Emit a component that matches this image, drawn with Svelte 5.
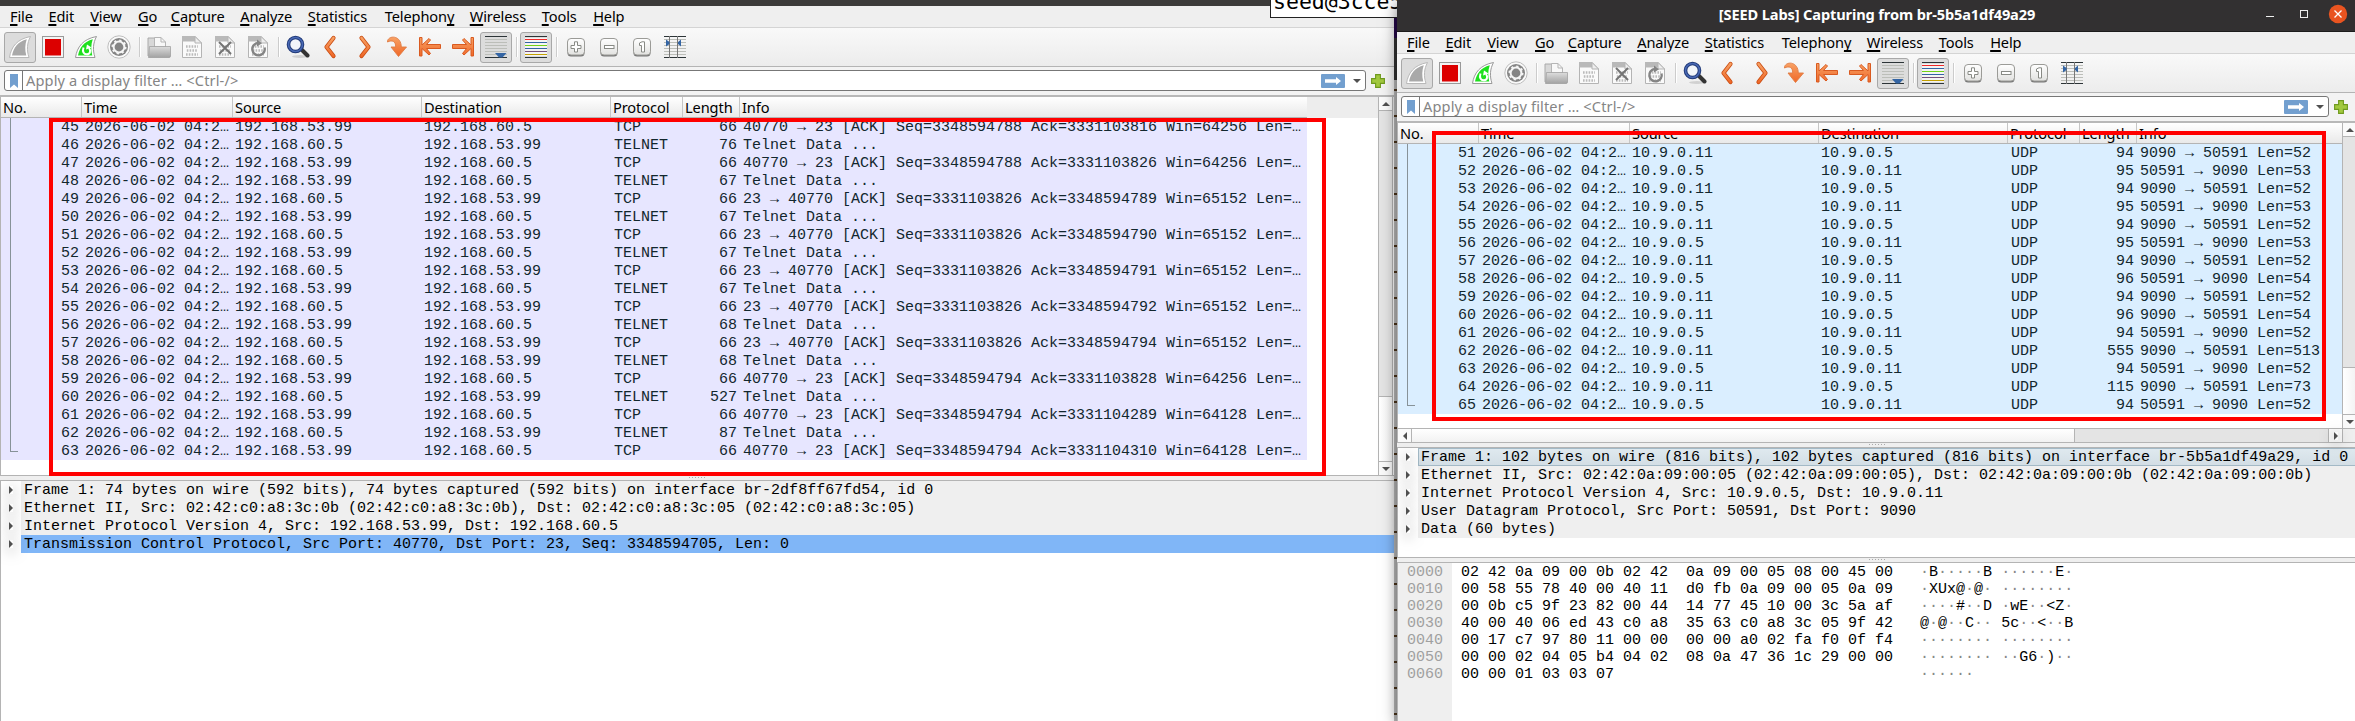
<script lang="ts">
    type Packet = [number, string, string, string, number, string];

    const menus = [
        { label: "File", key: 0, width: 38.4 },
        { label: "Edit", key: 0, width: 41.8 },
        { label: "View", key: 0, width: 47.8 },
        { label: "Go", key: 0, width: 32.8 },
        { label: "Capture", key: 0, width: 69.4 },
        { label: "Analyze", key: 0, width: 67.6 },
        { label: "Statistics", key: 0, width: 77 },
        { label: "Telephony", key: 8, width: 85 },
        { label: "Wireless", key: 0, width: 72 },
        { label: "Tools", key: 0, width: 51.4 },
        { label: "Help", key: 0, width: 46 },
    ];

    const tools = [
        "start", "stop", "restart", "options", "|",
        "open", "save", "close", "reload", "|",
        "find", "back", "forward", "goto", "first", "last", "autoscroll", "|",
        "colorize", "|",
        "zoomin", "zoomout", "zoom1", "columns",
    ];
    const pressed = ["start", "autoscroll", "colorize"];
    const columns = ["No.", "Time", "Source", "Destination", "Protocol", "Length", "Info"];

    const A = "192.168.53.99";
    const B = "192.168.60.5";
    const toServer = (ack: number, win: number) =>
        `40770 → 23 [ACK] Seq=33485947${ack < 3331103827 ? 88 : 94} Ack=${ack} Win=${win} Len=…`;
    const toClient = (ack: number) => `23 → 40770 [ACK] Seq=3331103826 Ack=${ack} Win=65152 Len=…`;
    const telnet = "Telnet Data ...";

    const telnetPackets: Packet[] = [
        [45, A, B, "TCP", 66, toServer(3331103816, 64256)],
        [46, B, A, "TELNET", 76, telnet],
        [47, A, B, "TCP", 66, toServer(3331103826, 64256)],
        [48, A, B, "TELNET", 67, telnet],
        [49, B, A, "TCP", 66, toClient(3348594789)],
        [50, A, B, "TELNET", 67, telnet],
        [51, B, A, "TCP", 66, toClient(3348594790)],
        [52, A, B, "TELNET", 67, telnet],
        [53, B, A, "TCP", 66, toClient(3348594791)],
        [54, A, B, "TELNET", 67, telnet],
        [55, B, A, "TCP", 66, toClient(3348594792)],
        [56, A, B, "TELNET", 68, telnet],
        [57, B, A, "TCP", 66, toClient(3348594794)],
        [58, B, A, "TELNET", 68, telnet],
        [59, A, B, "TCP", 66, toServer(3331103828, 64256)],
        [60, B, A, "TELNET", 527, telnet],
        [61, A, B, "TCP", 66, toServer(3331104289, 64128)],
        [62, B, A, "TELNET", 87, telnet],
        [63, A, B, "TCP", 66, toServer(3331104310, 64128)],
    ];

    // [number, sent by the client, frame length]
    const udpFrames: [number, boolean, number][] = [
        [51, false, 94], [52, true, 95], [53, false, 94], [54, true, 95], [55, false, 94],
        [56, true, 95], [57, false, 94], [58, true, 96], [59, false, 94], [60, false, 96],
        [61, true, 94], [62, false, 555], [63, true, 94], [64, false, 115], [65, true, 94],
    ];
    const udpPackets: Packet[] = udpFrames.map(([no, out, len]) => [
        no,
        out ? "10.9.0.5" : "10.9.0.11",
        out ? "10.9.0.11" : "10.9.0.5",
        "UDP",
        len,
        `${out ? "50591 → 9090" : "9090 → 50591"} Len=${len - 42}`,
    ]);

    const telnetTree = [
        "Frame 1: 74 bytes on wire (592 bits), 74 bytes captured (592 bits) on interface br-2df8ff67fd54, id 0",
        "Ethernet II, Src: 02:42:c0:a8:3c:0b (02:42:c0:a8:3c:0b), Dst: 02:42:c0:a8:3c:05 (02:42:c0:a8:3c:05)",
        "Internet Protocol Version 4, Src: 192.168.53.99, Dst: 192.168.60.5",
        "Transmission Control Protocol, Src Port: 40770, Dst Port: 23, Seq: 3348594705, Len: 0",
    ];
    const udpTree = [
        "Frame 1: 102 bytes on wire (816 bits), 102 bytes captured (816 bits) on interface br-5b5a1df49a29, id 0",
        "Ethernet II, Src: 02:42:0a:09:00:05 (02:42:0a:09:00:05), Dst: 02:42:0a:09:00:0b (02:42:0a:09:00:0b)",
        "Internet Protocol Version 4, Src: 10.9.0.5, Dst: 10.9.0.11",
        "User Datagram Protocol, Src Port: 50591, Dst Port: 9090",
        "Data (60 bytes)",
    ];

    const dump = [
        "02 42 0a 09 00 0b 02 42  0a 09 00 05 08 00 45 00",
        "00 58 55 78 40 00 40 11  d0 fb 0a 09 00 05 0a 09",
        "00 0b c5 9f 23 82 00 44  14 77 45 10 00 3c 5a af",
        "40 00 40 06 ed 43 c0 a8  35 63 c0 a8 3c 05 9f 42",
        "00 17 c7 97 80 11 00 00  00 00 a0 02 fa f0 0f f4",
        "00 00 02 04 05 b4 04 02  08 0a 47 36 1c 29 00 00",
        "00 00 01 03 03 07",
    ];
    const toAscii = (line: string) =>
        line.split("  ").map((half) =>
            half.split(" ").map((h) => {
                const n = parseInt(h, 16);
                return n > 32 && n < 127 ? String.fromCharCode(n) : "·";
            })
        );
</script>

{#snippet fin(fill, edge)}
    <path d="M1.5 22.5C3 12 9 4 22.5 1.5C19 8 18.5 15 21 22.5Z" fill="#fff" stroke={edge} />
    <path d="M4 20.5C5.500 12.500 10 6.500 18.800 4.200C17 9 16.700 15 18.300 20.500Z" {fill} />
{/snippet}

{#snippet sheet()}
    <path d="M2.500 1.500H15L21.500 8V22.500H2.500Z" fill="#fafafa" stroke="#b4b4b4" />
    <path d="M2 1H15L20 6.500H2Z" fill="#b9b9b9" />
    <path d="M15 1.500V8H21.500Z" fill="#eee" stroke="#b4b4b4" />
{/snippet}

{#snippet bits()}
    <g stroke="#bbb" stroke-width="2.600" stroke-dasharray="1.600 1.200">
        <path d="M6 11.500H18" /><path d="M6.800 15.500H18" /><path d="M6 19.500H18" />
    </g>
{/snippet}

{#snippet key()}
    <rect x="3.500" y="4" width="17" height="17.500" rx="3.500" fill="#777" />
    <rect x="3.500" y="3.500" width="17" height="16.500" rx="3.500" fill="url(#key)" stroke="#9b9b97" />
{/snippet}

{#snippet icon(name)}
    <svg width="24" height="24" viewBox="0 0 24 24" fill="none">
        {#if name === "start"}
            {@render fin("#a9a9a9", "#b9b9b9")}
        {:else if name === "stop"}
            <rect x="1.500" y="1.500" width="21" height="21" fill="#f4f4f4" stroke="#999" />
            <rect x="4" y="4" width="16" height="16.500" fill="#dc0000" />
        {:else if name === "restart"}
            {@render fin("#1ee01e", "#9a9a9a")}
            <path d="M9.500 12.500C8 17 10 19.300 12.500 19.300C16 19.300 17.300 16 15 13" stroke="#fff" stroke-width="2" />
            <path d="M12 14.500L13 9.500L17.500 12.500Z" fill="#fff" />
        {:else if name === "options"}
            <circle cx="12" cy="12" r="11.200" fill="#fafafa" stroke="#bdbdbd" />
            <circle cx="12" cy="12" r="9" fill="#858585" />
            <circle cx="12" cy="12" r="5.400" stroke="#f5f5f5" stroke-width="2" />
            <circle cx="12" cy="12" r="6.700" stroke="#f5f5f5" stroke-width="1.700" stroke-dasharray="2.300 2.960" />
            <circle cx="12" cy="12" r="2.400" fill="#858585" />
        {:else if name === "open"}
            <path d="M1 21V3H8L10 5V10" fill="#d8d8d8" stroke="#aaa" />
            <path d="M7.500 12V2.500H14L18.500 7V12Z" fill="#f8f8f8" stroke="#b5b5b5" />
            <path d="M14 2.500V7H18.500" stroke="#b5b5b5" />
            <path d="M2.500 11.500H23.500V21Q23.500 22.500 22 22.500H1.500Z" fill="url(#folder)" stroke="#999" stroke-width=".7" />
        {:else if name === "save"}
            {@render sheet()}{@render bits()}
        {:else if name === "close"}
            {@render sheet()}{@render bits()}
            <path d="M6 7L18 19M18 7L6 19" stroke="#747474" stroke-width="2" />
        {:else if name === "reload"}
            {@render sheet()}{@render bits()}
            <path d="M18.500 12.500A6.200 6.200 0 1 1 12 8" stroke="#848484" stroke-width="2.400" />
            <path d="M11 4.500L16 8.200L11 11.500Z" fill="#848484" />
        {:else if name === "find"}
            <ellipse cx="14" cy="21.500" rx="8" ry="1.500" fill="#000" opacity=".13" />
            <path d="M16 15L21.500 20.500" stroke="#333" stroke-width="4" stroke-linecap="round" />
            <circle cx="9.500" cy="9.500" r="7" fill="#f1f5fa" stroke="#213a78" stroke-width="3.600" />
            <circle cx="9.500" cy="9.500" r="7" stroke="#4868b4" stroke-width="1.600" />
        {:else if name === "back"}
            <path d="M14.500 3L7.500 12L14.500 21" stroke="#c84b10" stroke-width="4.200" stroke-linecap="round" stroke-linejoin="round" />
            <path d="M14.500 3L7.500 12L14.500 21" stroke="url(#orange)" stroke-width="2.600" stroke-linecap="round" stroke-linejoin="round" />
        {:else if name === "forward"}
            <path d="M9.500 3L16.500 12L9.500 21" stroke="#c84b10" stroke-width="4.200" stroke-linecap="round" stroke-linejoin="round" />
            <path d="M9.500 3L16.500 12L9.500 21" stroke="url(#orange)" stroke-width="2.600" stroke-linecap="round" stroke-linejoin="round" />
        {:else if name === "goto"}
            <path d="M2.500 7C2 .5 16 -1 16.300 12H21.500L13.500 21.500L6 12H10.700C10.800 6 7 4.800 2.500 7Z" fill="url(#orange)" stroke="#e07b42" stroke-width=".9" stroke-linejoin="round" />
        {:else if name === "first"}
            <path d="M1.500 2.500H4V10L11 3.500L12.500 5L8.500 9.500H22.500V13.500H8.500L12.500 18.500L11 20L4 13.500V21H1.500Z" fill="url(#orange)" stroke="#d95a20" stroke-linejoin="round" />
        {:else if name === "last"}
            <path d="M22.500 2.500H20V10L13 3.500L11.500 5L15.500 9.500H1.500V13.500H15.500L11.500 18.500L13 20L20 13.500V21H22.500Z" fill="url(#orange)" stroke="#d95a20" stroke-linejoin="round" />
        {:else if name === "autoscroll"}
            <path d="M1 4.500H23M1 7.500H23M1 10.500H23M1 13.500H23M1 16.500H23M1 19.500H23" stroke="#bcbeb9" />
            <path d="M1 1.500H23M1 22.500H23" stroke="#2c3437" />
            <path d="M11 18H22.500L18.500 22.500H15Z" fill="#3465a4" />
        {:else if name === "colorize"}
            <path d="M1 3H23V21H1Z" fill="#f4f4f4" />
            <path d="M1 1.500H23M1 22.500H23" stroke="#2c3437" />
            <path d="M1 4.500H23" stroke="#ef2929" />
            <path d="M1 7.500H23M1 13.500H23" stroke="#3465a4" />
            <path d="M1 10.500H23" stroke="#73d216" />
            <path d="M1 16.500H23" stroke="#75507b" />
            <path d="M1 19.500H23" stroke="#c4a000" />
        {:else if name === "zoomin"}
            {@render key()}
            <path d="M10.500 6.800H13.500V10.500H17V13.500H13.500V17H10.500V13.500H7V10.500H10.500Z" fill="#fff" stroke="#888a85" />
        {:else if name === "zoomout"}
            {@render key()}
            <rect x="7.500" y="10.500" width="9.500" height="3" fill="#fff" stroke="#888a85" />
        {:else if name === "zoom1"}
            {@render key()}
            <path d="M9.500 8L12 6.800H14.500V17H11.500V10.500H9.500Z" fill="#fff" stroke="#888a85" />
        {:else if name === "columns"}
            <path d="M1 4.500H23M1 7.500H23M1 10.500H23M1 13.500H23M1 16.500H23M1 19.500H23" stroke="#bcbeb9" />
            <path d="M1 1.500H23M1 22.500H23" stroke="#2c3437" />
            <path d="M6.500 1V23M14.500 1V23" stroke="#777" />
            <path d="M3 4.500L6.500 7V9L3 11.500ZM18 4.500L15 7V9L18 11.500Z" fill="#3465a4" />
        {/if}
    </svg>
{/snippet}

{#snippet arrow(dir)}
    <span class="arrow {dir}"></span>
{/snippet}

{#snippet chrome()}
    <nav class="menubar">
        {#each menus as { label, key: k, width }}
            <span style="width: {width}px">{label.slice(0, k)}<u>{label[k]}</u>{label.slice(k + 1)}</span>
        {/each}
    </nav>
    <div class="toolbar">
        {#each tools as tool}
            {#if tool === "|"}
                <i class="sep"></i>
            {:else}
                <span class="tool" class:pressed={pressed.includes(tool)}>{@render icon(tool)}</span>
            {/if}
        {/each}
    </div>
    <div class="filterbar">
        <div class="filter">
            <span class="bookmark">
                <svg width="8" height="14" viewBox="0 0 8 14"><path d="M0 0H8V14L4 10.500L0 14Z" fill="#729fcf" /></svg>
            </span>
            <span class="placeholder">Apply a display filter … &lt;Ctrl-/&gt;</span>
            <span class="apply">
                <svg width="16" height="8" viewBox="0 0 16 8"><path d="M0 2.200H11V0L16 4L11 8V5.800H0Z" fill="#fff" /></svg>
            </span>
            {@render arrow("down")}
        </div>
        <svg class="plus" width="14" height="14" viewBox="0 0 14 14">
            <path d="M4.600 .6H9.400V4.600H13.400V9.400H9.400V13.400H4.600V9.400H.6V4.600H4.600Z" fill="#a2c93f" stroke="#6f9a1e" stroke-width="1.100" />
        </svg>
    </div>
{/snippet}

{#snippet packetList(packets: Packet[])}
    <div class="packets">
        <div class="row header">
            {#each columns as column}<span>{column}</span>{/each}
        </div>
        <div class="rows">
            {#each packets as [no, src, dst, proto, len, info], i}
                <div class="row">
                    <span class="num">
                        <i class="thread" class:end={i === packets.length - 1}></i>{no}
                    </span>
                    <span>2026-06-02 04:2…</span>
                    <span class="addr">{src}</span>
                    <span class="addr">{dst}</span>
                    <span>{proto}</span>
                    <span class="num">{len}</span>
                    <span>{info}</span>
                </div>
            {/each}
        </div>
    </div>
{/snippet}

{#snippet scrollbar(thumb)}
    <div class="scrollbar">
        <span class="btn">{@render arrow("up")}</span>
        <span class="groove"></span>
        <span class="thumb" style="height: {thumb}px"></span>
        <span class="btn">{@render arrow("down")}</span>
    </div>
{/snippet}

{#snippet splitter()}
    <div class="splitter"><i></i></div>
{/snippet}

{#snippet tree(lines, selected, focus)}
    {#each lines as line, i}
        <div class="node">
            {@render arrow("right")}
            <span class:selected={i === selected} class:focus={i === focus}>{line}</span>
        </div>
    {/each}
{/snippet}

<svg class="defs" width="0" height="0">
    <defs>
        <linearGradient id="orange" x1="0" y1="0" x2="0" y2="24" gradientUnits="userSpaceOnUse">
            <stop offset="0" stop-color="#f9a86b" />
            <stop offset="1" stop-color="#ee6020" />
        </linearGradient>
        <linearGradient id="key" x1="0" y1="0" x2="0" y2="1">
            <stop offset="0" stop-color="#fff" />
            <stop offset="1" stop-color="#e2e2e0" />
        </linearGradient>
        <linearGradient id="folder" x1="0" y1="0" x2="0" y2="1">
            <stop offset="0" stop-color="#ddd" />
            <stop offset="1" stop-color="#a2a2a2" />
        </linearGradient>
    </defs>
</svg>

<main class="desktop">
    <section class="window left">
        <div class="titlebar"></div>
        {@render chrome()}
        <div class="pane list">
            {@render packetList(telnetPackets)}
            {@render scrollbar(64)}
        </div>
        {@render splitter()}
        <div class="pane details">
            {@render tree(telnetTree, 3, -1)}
        </div>
    </section>

    <div class="terminal"></div>

    <section class="window right">
        <div class="titlebar">
            <b>[SEED Labs] Capturing from br-5b5a1df49a29</b>
            <svg class="controls" width="84" height="20" viewBox="0 0 84 20">
                <path d="M0 12.500H8" stroke="#eee" />
                <rect x="34.500" y="6.500" width="7" height="7" fill="none" stroke="#eee" />
                <circle cx="72" cy="10" r="9.200" fill="#e95420" />
                <path d="M68.500 6.500L75.500 13.500M75.500 6.500L68.500 13.500" stroke="#fff" stroke-width="1.300" />
            </svg>
        </div>
        {@render chrome()}
        <div class="pane list">
            {@render packetList(udpPackets)}
            {@render scrollbar(46)}
        </div>
        <div class="hscroll">
            <span class="hbtn">{@render arrow("left")}</span>
            <span class="hthumb"></span>
            <span class="hgroove"></span>
            <span class="hbtn last">{@render arrow("right")}</span>
            <span class="corner"></span>
        </div>
        {@render splitter()}
        <div class="pane details">
            {@render tree(udpTree, -1, 0)}
        </div>
        {@render splitter()}
        <div class="pane hex">
            {#each dump as line, i}
                <div class="hexrow">
                    <span class="offset">00{i}0</span>
                    <span class="bytes">{line}</span>
                    <span class="ascii"
                        >{#each toAscii(line) as half, h}{h ? " " : ""}{#each half as c}<span class:dot={c === "·"}>{c}</span>{/each}{/each}</span
                    >
                </div>
            {/each}
        </div>
    </section>

    <div class="tooltip">seed@3cce5</div>
    <div class="mark mark-left"></div>
    <div class="mark mark-right"></div>
</main>

<style>
    :global(body) {
        margin: 0;
        overflow: hidden;
    }
    .defs {
        position: absolute;
    }
    .desktop {
        position: relative;
        display: grid;
        grid-template-columns: 1394px 3px 960px;
        width: 2355px;
        height: 721px;
        overflow: hidden;
        font: 14.6px "Noto Sans", sans-serif;
        color: #000;
    }
    .window {
        display: flex;
        flex-direction: column;
        min-width: 0;
        height: 721px;
        background: #efefef;
    }
    .right {
        position: relative;
        z-index: 1;
        box-shadow: 0 3px 14px rgba(0, 0, 0, 0.5);
    }
    .terminal {
        background:
            repeating-linear-gradient(transparent 0 24px, #4b351c 24px 26px) 0 65px no-repeat,
            linear-gradient(#2d2b2b 18px, #26094a 18px 38px, #333 38px 80px, #bbb 80px);
    }
    .titlebar {
        display: flex;
        flex: none;
        align-items: center;
        background: #3c3b3a;
    }
    .left .titlebar {
        height: 6px;
    }
    .right .titlebar {
        height: 31px;
        border-bottom: 1px solid #1c1b1b;
        background: #323031;
        color: #fff;
        line-height: 28px;
    }
    .titlebar b {
        flex: 1;
        padding-bottom: 3px;
        text-align: center;
        letter-spacing: -0.13px;
    }
    .controls {
        margin: 0 7px 4px -91px;
    }

    .menubar {
        display: flex;
        flex: none;
        height: 21px;
        padding-left: 10px;
        border-bottom: 1px solid #d4d4d4;
        line-height: 21px;
        letter-spacing: -0.12px;
        white-space: nowrap;
    }
    .menubar u {
        text-decoration-thickness: 1.6px;
        text-underline-offset: 2px;
        text-decoration-skip-ink: none;
    }

    .toolbar {
        display: flex;
        flex: none;
        align-items: center;
        height: 38px;
        padding-left: 3.5px;
        border-bottom: 1px solid #b4b4b4;
        background: linear-gradient(#f9f9f9, #ececec);
    }
    .tool {
        display: flex;
        align-items: center;
        justify-content: center;
        box-sizing: border-box;
        width: 32px;
        height: 31px;
        margin-right: 1px;
    }
    .pressed {
        border: 1px solid #a8a8a8;
        border-radius: 3px;
        background: #dcdcdc;
    }
    .sep {
        box-sizing: border-box;
        width: 2px;
        height: 20px;
        margin: 0 2px 0 3px;
        border-left: 1px solid #ccc;
        border-right: 1px solid #fff;
    }

    .filterbar {
        display: flex;
        flex: none;
        align-items: center;
        box-sizing: border-box;
        height: 30px;
        padding: 0 7px 1px 4px;
        border-bottom: 2px solid #b8b8b8;
        background: #f3f3f3;
    }
    .filter {
        display: flex;
        flex: 1;
        align-items: center;
        box-sizing: border-box;
        height: 21px;
        padding-right: 4px;
        border: 1px solid #777;
        border-radius: 3px;
        background: #fff;
    }
    .bookmark {
        display: flex;
        align-items: center;
        justify-content: center;
        width: 17px;
        height: 19px;
        border-right: 1px solid #777;
    }
    .placeholder {
        flex: 1;
        padding-left: 3px;
        color: #858585;
        line-height: 19px;
        letter-spacing: 0.12px;
    }
    .apply {
        display: flex;
        align-items: center;
        justify-content: center;
        width: 24px;
        height: 14px;
        margin-right: 8px;
        border-radius: 1px;
        background: #729fcf;
    }
    .plus {
        margin-left: 5px;
        margin-right: 2px;
    }

    .arrow {
        width: 0;
        height: 0;
        border: 4px solid transparent;
    }
    .arrow.down {
        border-top: 4px solid #505050;
        border-bottom: 0;
    }
    .arrow.up {
        border-bottom: 4px solid #505050;
        border-top: 0;
    }
    .arrow.right {
        border-left: 4px solid #505050;
        border-right: 0;
    }
    .arrow.left {
        border-right: 4px solid #505050;
        border-left: 0;
    }

    .pane {
        border-left: 1px solid #b4b4b4;
        background: #fff;
        font: 15px "Liberation Mono", monospace;
    }
    .list {
        display: flex;
        flex: none;
    }
    .left .list {
        height: 378px;
        border-bottom: 1px solid #b4b4b4;
        background: linear-gradient(#ededed 21px, #fff 21px);
    }
    .right .list {
        height: 305px;
    }
    .packets {
        flex: 1;
    }
    .left .packets {
        flex: none;
        width: 1306px;
        margin-right: 71px;
    }
    .row {
        display: grid;
        grid-template-columns: 81px 151px 189px 189px 72px 57px 1fr;
        height: 18px;
        line-height: 20px;
        color: #12272e;
        white-space: pre;
    }
    .row > span {
        box-sizing: border-box;
        padding: 0 3px;
        min-width: 0;
    }
    .row > .addr {
        padding-left: 2px;
    }
    .row.header {
        box-sizing: border-box;
        height: 21px;
        border-bottom: 1px solid #b4b4b4;
        background: linear-gradient(#fff, #e9e9e9);
        color: #000;
        font: 14.6px/20px "Noto Sans", sans-serif;
        letter-spacing: -0.1px;
    }
    .row.header span {
        border-right: 1px solid #c6c6c6;
        height: 20px;
        padding-left: 2px;
    }
    .row.header span:last-child {
        border-right: 0;
    }
    .left .rows {
        background: #e7e6ff;
    }
    .right .rows {
        background: #daeeff;
    }
    .row .num {
        display: flex;
        justify-content: flex-end;
    }
    .thread {
        width: 8px;
        height: 18px;
        margin: 0 auto 0 6px;
        border-left: 1px solid #879298;
        box-sizing: border-box;
    }
    .thread.end {
        height: 10px;
        border-bottom: 1px solid #879298;
    }

    .scrollbar {
        display: flex;
        flex-direction: column;
        box-sizing: border-box;
        width: 15px;
        border-left: 1px solid #b4b4b4;
        background: #fff;
    }
    .left .scrollbar {
        border-right: 1px solid #b4b4b4;
    }
    .btn,
    .hbtn {
        display: flex;
        flex: none;
        align-items: center;
        justify-content: center;
        height: 13px;
        background: #fafafa;
    }
    .groove {
        flex: 1;
        border-top: 1px solid #b4b4b4;
        border-bottom: 1px solid #b4b4b4;
        background: #e4e4e4;
    }
    .thumb {
        background: linear-gradient(90deg, #fff, #f2f2f2);
        border-bottom: 1px solid #b4b4b4;
    }
    .hscroll {
        display: flex;
        flex: none;
        height: 13px;
        border: 1px solid #b4b4b4;
        border-right: 0;
    }
    .hbtn {
        width: 13px;
    }
    .hthumb {
        width: 662px;
        border: 1px solid #b4b4b4;
        border-width: 0 1px;
        background: linear-gradient(#fff, #f2f2f2);
    }
    .hgroove {
        flex: 1;
        background: #e4e4e4;
    }
    .hbtn.last {
        border: 1px solid #b4b4b4;
        border-width: 0 1px;
    }
    .corner {
        width: 14px;
    }

    .splitter {
        display: flex;
        flex: none;
        justify-content: center;
        height: 4px;
        border-bottom: 1px solid #b4b4b4;
        background: #efefef;
    }
    .splitter i {
        width: 17px;
        height: 1px;
        margin-top: 1px;
        background: repeating-linear-gradient(90deg, #aaa 0 1px, transparent 1px 3px);
    }

    .details {
        flex: 1;
    }
    .right .details {
        flex: none;
        height: 109px;
        border-bottom: 1px solid #b4b4b4;
    }
    .node {
        display: flex;
        align-items: center;
        height: 18px;
        line-height: 20px;
        white-space: pre;
    }
    .node .arrow {
        margin: 0 8px;
    }
    .node span:last-child {
        flex: 1;
        padding-left: 3px;
        box-sizing: border-box;
        height: 18px;
        background: #efefef;
    }
    .node span.selected {
        background: #80b6f7;
    }
    .node span.focus {
        border: 1px solid #a3b9c6;
        padding-left: 2px;
        background: linear-gradient(#dfe9ef, #d3dee5);
        line-height: 18px;
    }

    .hex {
        flex: 1;
        background: linear-gradient(90deg, #efefef 54px, #fff 54px);
    }
    .hexrow {
        display: flex;
        height: 17px;
        line-height: 19px;
        white-space: pre;
    }
    .offset {
        width: 54px;
        padding-left: 9px;
        box-sizing: border-box;
        color: #a0a0a0;
    }
    .bytes {
        width: 459px;
        padding-left: 9px;
    }
    .dot {
        color: #888;
    }

    .tooltip {
        position: absolute;
        z-index: 0;
        top: 0;
        left: 1270px;
        width: 127px;
        height: 18px;
        overflow: hidden;
        box-sizing: border-box;
        padding-left: 2px;
        border: 1px solid #222;
        border-width: 0 0 1px 1px;
        background: #fff;
        font: 21.5px/4px "DejaVu Sans Mono", monospace;
    }
    .mark {
        position: absolute;
        z-index: 2;
        box-sizing: border-box;
        border: 4px solid #f00;
    }
    .mark-left {
        left: 49px;
        top: 118px;
        width: 1277px;
        height: 358px;
    }
    .mark-right {
        left: 1432px;
        top: 131px;
        width: 894px;
        height: 290px;
    }
</style>
